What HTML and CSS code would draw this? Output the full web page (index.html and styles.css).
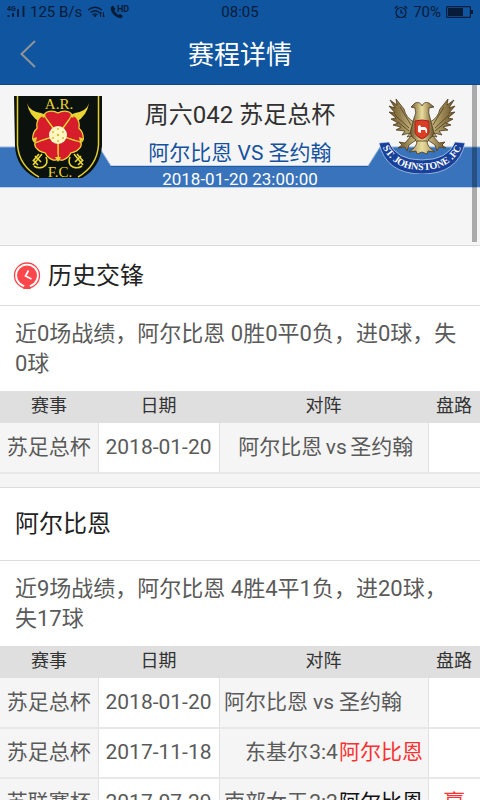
FILE: index.html
```html
<!DOCTYPE html>
<html lang="zh-CN">
<head>
<meta charset="utf-8">
<meta name="viewport" content="width=device-width, initial-scale=1">
<title>赛程详情</title>
<link rel="stylesheet" href="styles.css">
</head>
<body>
<header class="top">
  <div class="status">
    <div class="status-side">
      <svg class="signal" width="18" height="14" viewBox="0 0 18 14" aria-hidden="true">
        <text x="0" y="6" class="tiny">4G</text>
        <path d="M1.500 10v2M6 8v4M11 4v8M16.500 1v11" fill="none" stroke="#061c38" stroke-width="1.800"/>
      </svg>
      <span>125 B/s</span>
      <svg class="wifi" width="18" height="12" viewBox="0 0 18 12" aria-hidden="true">
        <path d="M1 4Q8 -1.500 15 4M3.500 6.500Q8 3 12.500 6.500M5.500 8.800Q8 7 10.500 8.800" fill="none" stroke="#061c38" stroke-width="1.300"/>
        <path d="M7 9.500h2l-1 1.500zM13.500 11V6M12 7.500L13.500 6 15 7.500M16.500 6v5M15 9.500l1.500 1.500L18 9.500" fill="none" stroke="#061c38"/>
      </svg>
      <svg class="call" width="20" height="14" viewBox="0 0 20 14" aria-hidden="true">
        <path d="M1 2L3 .5 5.500 4 4.200 5.500Q6 8.500 8.500 10L10 8.800 13 11 11.500 13Q8 14 4 10 0 6 1 2z" fill="#061c38"/>
        <text x="7" y="7" class="hd">HD</text>
      </svg>
    </div>
    <span>08:05</span>
    <div class="status-side status-right">
      <svg width="14" height="14" viewBox="0 0 14 14" aria-hidden="true">
        <g fill="none" stroke="#061c38" stroke-width="1.200"><circle cx="7" cy="7.500" r="5"/><path d="M7 4.500v3.500h2.500M.8 3.500L3.500 1M13.200 3.500L10.500 1M3.500 11.500L2.300 13M10.500 11.500l1.200 1.500"/></g>
      </svg>
      <span class="percent">70%</span>
      <svg width="27" height="12" viewBox="0 0 27 12" aria-hidden="true">
        <rect x=".6" y=".6" width="23.800" height="10.800" rx="1" fill="none" stroke="#061c38" stroke-width="1.200"/>
        <path d="M2 2h15v8H2zM25 4h2v4h-2z" fill="#061c38"/>
      </svg>
    </div>
  </div>
  <div class="bar">
    <button class="back" type="button" aria-label="返回">
      <svg width="16" height="28" viewBox="0 0 16 28"><path d="M15 1L1.500 14 15 27" fill="none" stroke="#909398" stroke-width="2"/></svg>
    </button>
    <h1>赛程详情</h1>
  </div>
</header>

<main>
  <section class="hero">
    <svg class="ribbon" viewBox="0 0 480 42" preserveAspectRatio="none" aria-hidden="true">
      <path d="M0 1H99L111 20H368L380 1H480V41H0z" fill="#3873bb"/>
      <path d="M0 1H99L111 20H368L380 1H480" fill="none" stroke="#8fb2dc"/>
      <path d="M111 20.500H368" stroke="#1d5ba5" stroke-width="1"/>
      <path d="M0 41.500H480" stroke="#b9d2ee"/>
    </svg>
    <svg class="crest" width="88" height="82" viewBox="0 0 88 82" role="img" aria-label="阿尔比恩">
      <path d="M0 0H88V50Q86 72 68 82H22Q2 72 1 50z" fill="#0b110c"/>
      <path d="M3.500 0V49Q5 70 25 81M84.500 0V49Q83 70 64 81" fill="none" stroke="#e3cf2e" stroke-width="1.500"/>
      <path d="M13 7Q15 15 27 17L31 22 26 26Q15 20 13 7zM75 7Q73 15 61 17L57 22 62 26Q73 20 75 7z" fill="#ead633"/>
      <g fill="none" stroke="#ead633" stroke-width="1.600"><path d="M28 58L19 69M25 58L19 65M32 61Q35 68 29 71Q24 73 20 70M60 58L69 69M63 58L69 65M56 61Q53 68 59 71Q64 73 68 70"/><path d="M21 60l6 6M19 64l5 5M67 60l-6 6M69 64l-5 5"/></g>
      <g fill="#d71d2b" stroke="#ead633" stroke-width="1.300" stroke-linejoin="round">
        <path id="petal" d="M44 39L33.400 24.400Q27 19 33 16Q39 14 44 17Q49 14 55 16Q61 19 54.600 24.400z"/>
        <use href="#petal" transform="rotate(72 44 39)"/><use href="#petal" transform="rotate(144 44 39)"/><use href="#petal" transform="rotate(216 44 39)"/><use href="#petal" transform="rotate(288 44 39)"/>
      </g>
      <g fill="#ead633"><path d="M27 17l5 2-3 3zM61 17l-5 2 3 3zM18 43l5-2-1 5zM70 43l-5-2 1 5zM44 66l-3-5h6z"/></g>
      <circle cx="44" cy="39" r="9" fill="#fff8c4"/>
      <g fill="#d8ba2b"><circle cx="44" cy="39" r="1.200"/><circle cx="39" cy="36" r="1"/><circle cx="44" cy="33" r="1"/><circle cx="49" cy="36" r="1"/><circle cx="49" cy="42" r="1"/><circle cx="44" cy="45" r="1"/><circle cx="39" cy="42" r="1"/></g>
      <text x="45" y="13" class="crest-text">A.R.</text>
      <text x="46" y="81" class="crest-text">F.C.</text>
    </svg>
    <div class="match">
      <h2>周六042 苏足总杯</h2>
      <p class="teams">阿尔比恩 VS 圣约翰</p>
      <p class="kickoff">2018-01-20 23:00:00</p>
    </div>
    <svg class="crest crest-away" width="88" height="76" viewBox="0 0 88 76" role="img" aria-label="圣约翰">
      <defs>
        <linearGradient id="gold" x2="1"><stop stop-color="#695127"/><stop offset=".5" stop-color="#eadd9d"/><stop offset="1" stop-color="#695127"/></linearGradient>
        <path id="arc" d="M3 46Q14 72 44 72Q74 72 85 46"/>
      </defs>
      <path d="M1 45L11 44Q18 62 44 62Q70 62 77 44L87 45Q80 76 44 76Q8 76 1 45z" fill="#17419a" stroke="#e1e8f3" stroke-width=".6"/>
      <g fill="url(#gold)" stroke="#4c3b20" stroke-width=".8" stroke-linejoin="round">
        <path d="M36 24Q28 20 26 11L18 1 19 7 12 2 17 10 11 8 17 15 11 14 18 20 13 21 20 25 15 27 23 29 18 32 27 33 24 37 32 35 29 39 37 37zM52 24Q60 20 62 11L70 1 69 7 76 2 71 10 77 8 71 15 77 14 70 20 75 21 68 25 73 27 65 29 70 32 61 33 64 37 56 35 59 39 51 37z"/>
        <path d="M33 9L37 5Q42 3 44 8Q46 3 51 5L56 9 51 10Q50 15 52 20L56 35Q52 44 44 46Q36 44 32 35L36 20Q39 15 37 10z"/>
        <path d="M33 38L27 45 21 44 24 47 20 50 27 49 29 53 31 47 38 42zM55 38L61 45 67 44 64 47 68 50 61 49 59 53 57 47 50 42zM39 43Q39 49 31 54L38 53 39 56 44 54 49 56 50 53 57 54Q49 49 49 43z"/>
        <path d="M22 9L33 27M17 17L31 30M20 24L31 33M66 9L55 27M71 17L57 30M68 24L57 33" fill="none"/>
      </g>
      <path d="M37 23Q44 21 51 23V35Q49 39 44 41Q39 39 37 35z" fill="#dc3d25" stroke="#9e271c"/>
      <path d="M40 34v-6l2-1 1 2h4l2 2v4h-1l-1-3h-4v3z" fill="#fff"/>
      <text class="scroll-text"><textPath href="#arc" startOffset="50%">ST. JOHNSTONE .FC</textPath></text>
    </svg>
    <span class="scrollbar" aria-hidden="true"></span>
  </section>

  <section class="panel">
    <div class="heading heading-icon">
      <svg width="28" height="28" viewBox="0 0 28 28" aria-hidden="true">
        <circle cx="14" cy="13.500" r="12.500" fill="#fff" stroke="#f8474a" stroke-width="1.300"/>
        <circle cx="14" cy="13.500" r="10" fill="#fb474b"/>
        <path d="M10 27L12 22H16L18 27z" fill="#fb474b"/>
        <path d="M15.500 8.500L12.500 14 18.500 17" fill="none" stroke="#fff" stroke-width="1.700"/>
      </svg>
      <h2>历史交锋</h2>
    </div>
    <p class="summary">近0场战绩，阿尔比恩 0胜0平0负，进0球，失0球</p>
    <table>
      <colgroup><col class="c-league"><col class="c-date"><col><col class="c-result"></colgroup>
      <thead><tr><th>赛事</th><th>日期</th><th>对阵</th><th>盘路</th></tr></thead>
      <tbody>
        <tr><td>苏足总杯</td><td>2018-01-20</td><td><div class="versus versus-history"><span>阿尔比恩</span><span>vs</span><span>圣约翰</span></div></td><td></td></tr>
      </tbody>
    </table>
  </section>

  <section class="panel panel-next">
    <div class="heading heading-tall"><h2>阿尔比恩</h2></div>
    <p class="summary">近9场战绩，阿尔比恩 4胜4平1负，进20球，失17球</p>
    <table>
      <colgroup><col class="c-league"><col class="c-date"><col><col class="c-result"></colgroup>
      <thead><tr><th>赛事</th><th>日期</th><th>对阵</th><th>盘路</th></tr></thead>
      <tbody>
        <tr><td>苏足总杯</td><td>2018-01-20</td><td><div class="versus"><span>阿尔比恩</span><span>vs</span><span>圣约翰</span></div></td><td></td></tr>
        <tr><td>苏足总杯</td><td>2017-11-18</td><td><div class="versus"><span>东基尔</span><span>3:4</span><span class="win">阿尔比恩</span></div></td><td></td></tr>
        <tr><td>苏联赛杯</td><td>2017-07-29</td><td><div class="versus"><span>南部女王</span><span>2:2</span><span class="draw">阿尔比恩</span></div></td><td class="win">赢</td></tr>
      </tbody>
    </table>
  </section>
</main>
</body>
</html>
```
FILE: styles.css
```css
* { box-sizing: border-box; }
html { height: 100%; overflow: hidden; }
body {
  height: 100%;
  margin: 0;
  overflow: hidden;
  background: #f4f4f4;
  color: #5a5a5a;
  font-family: Roboto, "Noto Sans CJK SC", sans-serif;
}
h1, h2, p { margin: 0; font-weight: 400; }

.top { background: #1055a0; border-bottom: 1px solid #064790; }
.status {
  display: grid;
  grid-template-columns: 1fr auto 1fr;
  align-items: center;
  height: 24px;
  padding: 0 7px;
  color: #061c38;
  font-size: 15px;
}
.status-side { display: flex; align-items: center; gap: 5px; }
.status-right { justify-content: flex-end; }
.tiny { font-size: 7px; font-weight: 700; fill: #061c38; }
.hd { font-size: 9px; font-weight: 700; fill: #061c38; }
.bar {
  display: grid;
  grid-template-columns: 1fr auto 1fr;
  align-items: center;
  height: 60px;
  padding: 0 20px;
}
.back { display: flex; justify-self: start; padding: 0; border: 0; background: none; }
.bar h1 { padding-top: 2px; color: #fff; font-size: 26px; line-height: 40px; }

.hero {
  position: relative;
  display: flex;
  justify-content: space-between;
  align-items: flex-start;
  height: 160px;
  padding: 11px 14px 0;
  background: #f5f5f5;
}
.ribbon { position: absolute; left: 0; top: 61px; width: 100%; height: 42px; }
.crest, .match { position: relative; }
.crest { flex: none; }
.crest-away { margin-top: 2px; }
.match { flex: 1; text-align: center; white-space: nowrap; }
.match h2 { color: #303030; font-size: 24px; line-height: 38px; }
.teams { color: #1452a0; font-size: 21px; line-height: 38px; }
.kickoff { color: #fff; font-size: 17px; line-height: 14px; }
.crest-text { font: 400 15px "Liberation Serif", serif; fill: #ead633; text-anchor: middle; }
.scroll-text { font: 700 10px "Liberation Serif", serif; fill: #fff; text-anchor: middle; }
.scrollbar {
  position: absolute;
  top: 0;
  right: 3px;
  width: 5px;
  height: 157px;
  background: rgba(0, 0, 0, .3);
}

.panel { border-top: 1px solid #ddd; background: #fff; }
.panel-next { margin-top: 13px; }
.heading {
  display: flex;
  align-items: center;
  gap: 7px;
  height: 60px;
  padding: 0 15px;
  border-bottom: 1px solid #ddd;
}
.heading-icon { padding-left: 13px; }
.heading-tall { height: 73px; }
.heading h2 { color: #222; font-size: 24px; line-height: 36px; }
.summary { padding: 13px 15px 12px; font-size: 22px; line-height: 30px; }

table { width: 100%; border-collapse: collapse; table-layout: fixed; }
.c-league { width: 98px; }
.c-date { width: 121px; }
.c-result { width: 52px; }
th {
  height: 32px;
  padding: 0 0 2px;
  background: #dfdfdf;
  color: #333;
  font-size: 18px;
  font-weight: 400;
  line-height: 28px;
}
td {
  height: 50px;
  padding: 0 0 2px;
  border-right: 1px solid #e2e2e2;
  border-bottom: 2px solid #e8e8e8;
  background: #fff;
  font-size: 21px;
  line-height: 30px;
  text-align: center;
  white-space: nowrap;
}
td:nth-child(odd) { background: #f5f5f5; }
td:last-child { border-right: 0; }
.versus { display: grid; grid-template-columns: 1fr 31px 1fr; }
.versus-history { grid-template-columns: 104fr 28px 78fr; }
.versus span:first-child { text-align: right; }
.versus span:last-child { text-align: left; }
td.win, .versus .win { color: #fb3030; }
.versus .draw { color: #111; }
```
